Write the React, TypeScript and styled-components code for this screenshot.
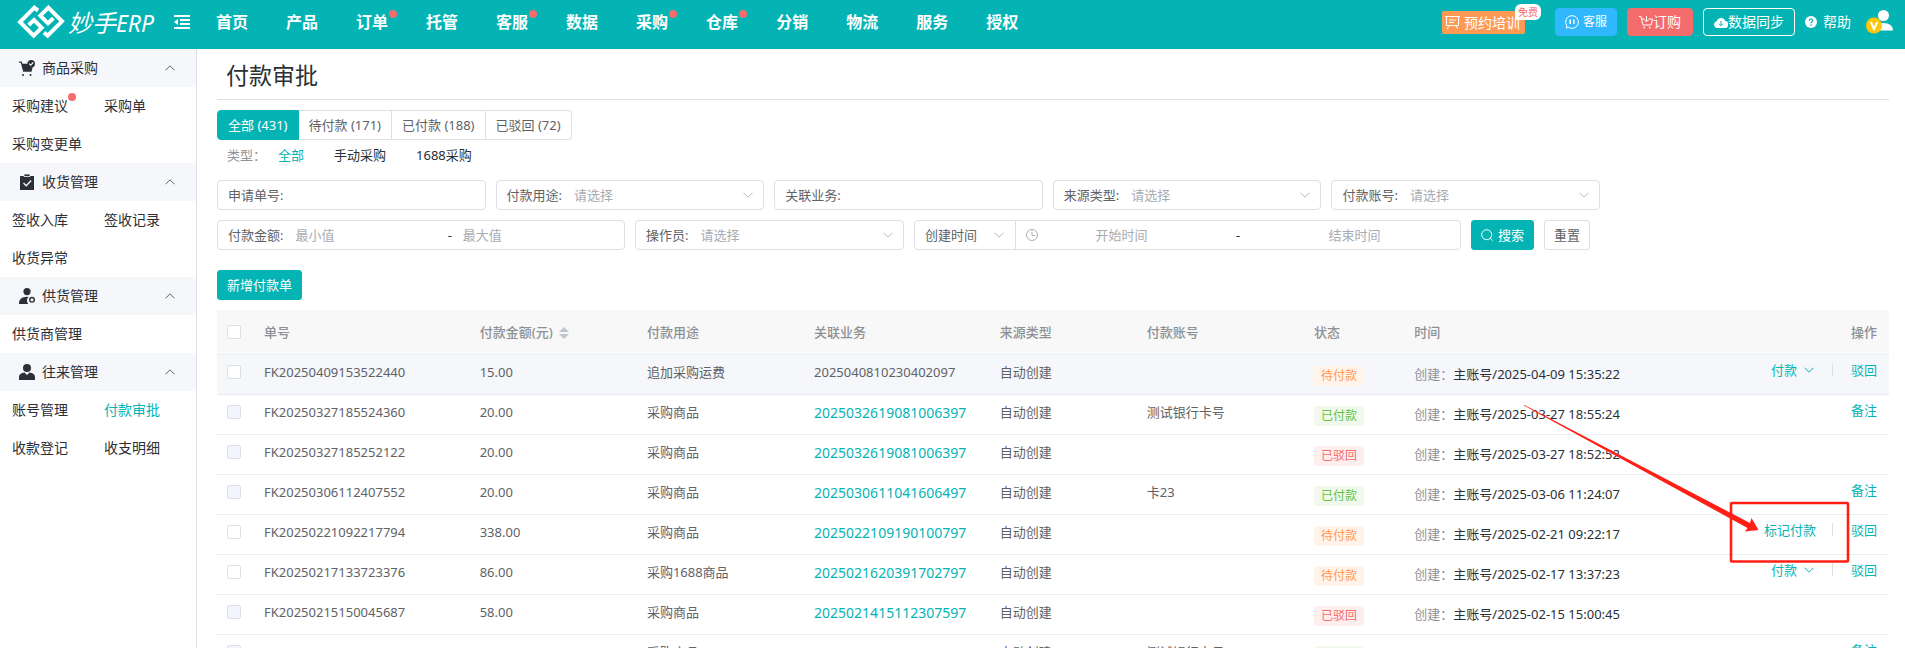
import React from "react";
import styled, { createGlobalStyle, css } from "styled-components";

const teal = "#04b4b4";
const line = "#dcdfe6";
const soft = "#f5f7fb";

const Global = createGlobalStyle`
  * { box-sizing: border-box; }
  body {
    margin: 0;
    color: #2b2f36;
    background: #fff;
    font: 13px/20px "Noto Sans", "Noto Sans CJK SC", sans-serif;
  }
  button, input, select { font: inherit; color: inherit; }
  a { color: inherit; text-decoration: none; }
`;

const Page = styled.div`
  height: 100vh;
  display: flex;
  flex-direction: column;
  overflow: hidden;
`;

const TopBar = styled.header`
  display: flex;
  align-items: center;
  height: 49px;
  flex: none;
  padding: 0 12px 0 17px;
  background: ${teal};
  color: #fff;
`;

const Brand = styled.a`
  display: flex;
  align-items: center;
  gap: 3px;
  width: 140px;
  height: 44px;
  margin-bottom: 5px;
  flex: none;
  font: italic 400 24px/36px "Noto Sans CJK SC", sans-serif;
  white-space: nowrap;
  small { font-family: "Noto Sans", sans-serif; font-size: 23px; }
`;

const IconButton = styled.button`
  display: flex;
  padding: 0;
  border: 0;
  background: none;
  color: inherit;
`;

const Collapse = styled(IconButton)`
  margin: 0 26px 5px 17px;
`;

const Nav = styled.nav`
  display: flex;
  gap: 38px;
`;

const Dot = styled.i`
  position: absolute;
  top: -3px;
  right: -8px;
  width: 8px;
  height: 8px;
  border-radius: 50%;
  background: #f56c6c;
`;

const NavLink = styled.a`
  position: relative;
  height: 24px;
  margin-bottom: 6px;
  font-size: 16px;
  line-height: 24px;
  font-weight: 700;
  white-space: nowrap;
  ${Dot} { top: 0; right: -9px; }
`;

const Tools = styled.div`
  display: flex;
  align-items: center;
  gap: 10px;
  height: 44px;
  margin-left: auto;
  margin-bottom: 5px;
`;

const Training = styled.a`
  position: relative;
  display: flex;
  align-items: center;
  gap: 4px;
  width: 83px;
  height: 23px;
  margin-right: 20px;
  padding-left: 3px;
  border-radius: 2px;
  background: #ff9a55;
  font-size: 14px;
  line-height: 23px;
  white-space: nowrap;
`;

const FreeBadge = styled.span`
  position: absolute;
  top: -7px;
  right: -16px;
  width: 26px;
  height: 16px;
  border-radius: 6px 6px 6px 0;
  background: #fff;
  color: #f56c6c;
  font-size: 10px;
  line-height: 16px;
  text-align: center;
`;

const ToolButton = styled.button<{ $bg?: string; $w: number; $small?: boolean }>`
  display: flex;
  align-items: center;
  justify-content: center;
  gap: ${(p) => (p.$small ? 4 : 0)}px;
  width: ${(p) => p.$w}px;
  height: 28px;
  padding: 0;
  border: 1px solid ${(p) => p.$bg ?? "#fff"};
  border-radius: 4px;
  background: ${(p) => p.$bg ?? "transparent"};
  color: #fff;
  font-size: ${(p) => (p.$small ? 12 : 14)}px;
  white-space: nowrap;
`;

const Help = styled.a`
  display: flex;
  align-items: center;
  gap: 6px;
  margin-right: 5px;
  font-size: 14px;
`;

const Body = styled.div`
  display: flex;
  flex: 1;
  min-height: 0;
`;

const Side = styled.aside`
  width: 197px;
  flex: none;
  border-right: 1px solid ${line};
  font-size: 14px;
`;

const GroupHead = styled.button`
  display: flex;
  align-items: center;
  gap: 6px;
  width: 100%;
  height: 38px;
  padding: 0 21px 0 19px;
  border: 0;
  background: ${soft};
  > svg:last-child { margin-left: auto; }
`;

const GroupItems = styled.div`
  display: grid;
  grid-template-columns: 92px 1fr;
  padding-left: 12px;
  line-height: 38px;
`;

const SideLink = styled.a<{ $active?: boolean }>`
  color: ${(p) => (p.$active ? teal : "inherit")};
  white-space: nowrap;
  span { position: relative; }
`;

const Main = styled.main`
  flex: 1;
  min-width: 0;
  padding: 0 16px 0 20px;
`;

const Title = styled.h1`
  height: 51px;
  margin: 0 0 10px;
  padding-left: 9px;
  border-bottom: 1px solid ${line};
  font-size: 23px;
  line-height: 52px;
  font-weight: 400;
`;

const Tabs = styled.div`
  display: flex;
`;

const Tab = styled.button<{ $active?: boolean }>`
  height: 30px;
  padding: 0 10px;
  border: 1px solid ${line};
  border-left-width: 0;
  background: #fff;
  color: #606266;
  line-height: 28px;
  &:first-child { border-radius: 4px 0 0 4px; border-left-width: 1px; }
  &:last-child { border-radius: 0 4px 4px 0; }
  ${(p) =>
    p.$active &&
    css`
      background: ${teal};
      border-color: ${teal};
      color: #fff;
    `}
`;

const Types = styled.div`
  display: flex;
  gap: 30px;
  height: 40px;
  padding-left: 10px;
  line-height: 30px;
  > span { margin-right: -18px; color: #909399; }
`;

const TypeLink = styled.a<{ $active?: boolean }>`
  color: ${(p) => (p.$active ? teal : "inherit")};
`;

const Filters = styled.div`
  display: flex;
  flex-direction: column;
  gap: 10px;
  padding-right: 289px;
`;

const FilterRow = styled.div`
  display: flex;
  gap: 10px;
  &:last-child { padding-right: 10px; }
`;

const Box = styled.div<{ $w?: number }>`
  display: flex;
  align-items: center;
  flex: ${(p) => (p.$w ? `0 1 ${p.$w}px` : "1 1 0")};
  min-width: 0;
  height: 30px;
  padding: 0 10px;
  border: 1px solid ${line};
  border-radius: 4px;
  color: #606266;
  label { flex: none; }
`;

const DateBox = styled(Box)`
  padding-right: 22px;
`;

const field = css`
  flex: 1;
  width: 0;
  min-width: 0;
  height: 28px;
  padding: 0;
  border: 0;
  outline: 0;
  background: none;
`;

const Input = styled.input<{ $gap?: number; $center?: boolean }>`
  ${field}
  margin-left: ${(p) => p.$gap ?? 12}px;
  text-align: ${(p) => (p.$center ? "center" : "left")};
  &::placeholder { color: #a8abb2; opacity: 1; }
`;

const Select = styled.select<{ $filled?: boolean }>`
  ${field}
  appearance: none;
  margin-left: ${(p) => (p.$filled ? 0 : 12)}px;
  color: ${(p) => (p.$filled ? "#606266" : "#a8abb2")};
`;

const Dash = styled.span<{ $w?: number }>`
  flex: 0 1 ${(p) => p.$w ?? 6}px;
  color: #2b2f36;
  text-align: center;
`;

const DateKind = styled.div`
  display: flex;
  align-items: center;
  width: 91px;
  flex: none;
  height: 28px;
  margin-right: 10px;
  padding-right: 11px;
  border-right: 1px solid ${line};
`;

const Button = styled.button<{ $primary?: boolean }>`
  display: flex;
  align-items: center;
  flex: none;
  gap: 5px;
  height: 30px;
  padding: 0 9px;
  border: 1px solid ${(p) => (p.$primary ? teal : line)};
  border-radius: 3px;
  background: ${(p) => (p.$primary ? teal : "#fff")};
  color: ${(p) => (p.$primary ? "#fff" : "#606266")};
`;

const Create = styled(Button)`
  margin: 20px 0 10px;
`;

const TableWrap = styled.div`
  position: relative;
`;

const Table = styled.table`
  width: 100%;
  table-layout: fixed;
  border-collapse: collapse;
  color: #606266;
`;

const Th = styled.th<{ $right?: boolean }>`
  height: 44px;
  padding: 0 10px;
  border-bottom: 1px solid #ebeef5;
  background: #f8f8f8;
  color: #8d9095;
  font-weight: 500;
  text-align: ${(p) => (p.$right ? "right" : "left")};
  white-space: nowrap;
  svg { margin-left: 6px; vertical-align: -2px; }
  &:last-child { padding-right: 12px; }
`;

const Row = styled.tr<{ $hover?: boolean }>`
  height: 40px;
  background: ${(p) => (p.$hover ? soft : "#fff")};
`;

const Td = styled.td`
  padding: 7px 10px 0;
  border-bottom: 1px solid #e9ecf1;
  vertical-align: top;
  white-space: nowrap;
  &:last-child { padding-right: 12px; }
`;

const Check = styled.input`
  appearance: none;
  display: block;
  width: 14px;
  height: 14px;
  margin: 3px 0 0;
  border: 1px solid ${line};
  border-radius: 2px;
  background: #fff;
  &:disabled { background: #f2f5fb; }
  th & { margin-top: 0; }
`;

const BizLink = styled.a`
  color: ${teal};
  font-size: 14px;
  line-height: 22px;
`;

const tones = {
  待付款: ["#ff9a4c", "#fff3ea"],
  已付款: ["#67c23a", "#f0f9eb"],
  已驳回: ["#f56c6c", "#feeeee"],
};
type Status = keyof typeof tones;

const Tag = styled.span<{ $s: Status }>`
  display: block;
  width: 50px;
  height: 20px;
  margin-top: 4px;
  border-radius: 4px;
  background: ${(p) => tones[p.$s][1]};
  color: ${(p) => tones[p.$s][0]};
  font-size: 12px;
  line-height: 20px;
  text-align: center;
`;

const Time = styled.div`
  color: #2b2f36;
  line-height: 24px;
  span { color: #909399; }
`;

const Actions = styled.div`
  display: flex;
  align-items: center;
  justify-content: flex-end;
  height: 16px;
  color: ${teal};
`;

const Action = styled.button`
  display: flex;
  align-items: center;
  gap: 7px;
  padding: 0;
  border: 0;
  background: none;
  color: ${teal};
  line-height: 16px;
`;

const Divider = styled.i<{ $gap: number }>`
  width: 1px;
  height: 13px;
  margin: 0 18px 0 ${(p) => p.$gap}px;
  background: ${line};
`;

const Annotation = styled.svg`
  position: absolute;
  top: 90px;
  right: 35px;
  pointer-events: none;
`;

const Chevron = ({ up, color = "#b4b8c0", w = 10 }: { up?: boolean; color?: string; w?: number }) => (
  <svg width={w} height="6" viewBox="0 0 10 6" fill="none" stroke={color} aria-hidden>
    <path d={up ? "M.5 5.3 5 .8l4.500 4.500" : "M.5.7 5 5.200 9.500.7"} />
  </svg>
);

const Logo = () => (
  <svg width="48" height="34" viewBox="51 15 144 102" fill="none" stroke="#fff" strokeWidth="12" aria-hidden>
    <path d="M114 32 103 23 60 66l41 41 24-24-23-23-16 15" />
    <path d="M132 98l11 9 43-43-41-41-24 24 23 23 16-15" />
  </svg>
);

const groupIcons = {
  cart: (
    <>
      <path d="M0 1.500h2.600l.9 2.200h5.200a4 4 0 0 0 5 3.300l-1.200 4.800H4.200L1.800 2.800H0z" />
      <circle cx="12.200" cy="3.800" r="3.800" />
      <path d="m10.300 3.700 1.400 1.500 2.600-2.700" fill="none" stroke={soft} strokeWidth="1.100" />
      <circle cx="4" cy="15" r="1" />
      <circle cx="11.500" cy="15" r="1" />
    </>
  ),
  clip: (
    <>
      <path d="M1 2h14v14H1z" />
      <path d="M5 0h6v2.500H5z" stroke={soft} strokeWidth=".8" />
      <path d="m4.500 9 2.700 2.700 5-5.200" fill="none" stroke={soft} strokeWidth="1.400" />
    </>
  ),
  gear: (
    <>
      <circle cx="8" cy="3.600" r="3.600" />
      <path d="M0 16c0-5 3-7 8-7.200 1 0 1.500.3 1.500.3-2 1.900-2 4.900-.3 6.900z" />
      <circle cx="13" cy="11.800" r="2.300" fill="none" stroke="#2b2f36" strokeWidth="1.400" />
    </>
  ),
  user: (
    <>
      <circle cx="8" cy="4" r="4" />
      <path d="M0 16v-3c0-2.500 2-4 5.500-4.500L8 11l2.500-2.500C14 9 16 10.500 16 13v3z" />
    </>
  ),
};

const nav: [string, boolean?][] = [
  ["首页"], ["产品"], ["订单", true], ["托管"], ["客服", true], ["数据"],
  ["采购", true], ["仓库", true], ["分销"], ["物流"], ["服务"], ["授权"],
];

const groups: { name: string; icon: keyof typeof groupIcons; items: string[] }[] = [
  { name: "商品采购", icon: "cart", items: ["采购建议", "采购单", "采购变更单"] },
  { name: "收货管理", icon: "clip", items: ["签收入库", "签收记录", "收货异常"] },
  { name: "供货管理", icon: "gear", items: ["供货商管理"] },
  { name: "往来管理", icon: "user", items: ["账号管理", "付款审批", "收款登记", "收支明细"] },
];

type Item = {
  no: string; amount: string; use: string; biz: string; plain?: boolean;
  account?: string; status: Status; time: string; acts: string[];
};

const rows: Item[] = [
  { no: "FK20250409153522440", amount: "15.00", use: "追加采购运费", biz: "2025040810230402097", plain: true, status: "待付款", time: "2025-04-09 15:35:22", acts: ["付款", "驳回"] },
  { no: "FK20250327185524360", amount: "20.00", use: "采购商品", biz: "2025032619081006397", account: "测试银行卡号", status: "已付款", time: "2025-03-27 18:55:24", acts: ["备注"] },
  { no: "FK20250327185252122", amount: "20.00", use: "采购商品", biz: "2025032619081006397", status: "已驳回", time: "2025-03-27 18:52:52", acts: [] },
  { no: "FK20250306112407552", amount: "20.00", use: "采购商品", biz: "2025030611041606497", account: "卡23", status: "已付款", time: "2025-03-06 11:24:07", acts: ["备注"] },
  { no: "FK20250221092217794", amount: "338.00", use: "采购商品", biz: "2025022109190100797", status: "待付款", time: "2025-02-21 09:22:17", acts: ["标记付款", "驳回"] },
  { no: "FK20250217133723376", amount: "86.00", use: "采购1688商品", biz: "2025021620391702797", status: "待付款", time: "2025-02-17 13:37:23", acts: ["付款", "驳回"] },
  { no: "FK20250215150045687", amount: "58.00", use: "采购商品", biz: "2025021415112307597", status: "已驳回", time: "2025-02-15 15:00:45", acts: [] },
  { no: "FK20250215150021034", amount: "70.00", use: "采购商品", biz: "2025021415112307597", account: "测试银行卡号", status: "已付款", time: "2025-02-15 15:00:21", acts: ["备注"] },
];

const SelectBox = ({ id, label, w }: { id: string; label: string; w?: number }) => (
  <Box $w={w}>
    <label htmlFor={id}>{label}:</label>
    <Select id={id}><option>请选择</option></Select>
    <Chevron />
  </Box>
);

export default function App() {
  return (
    <Page>
      <Global />
      <TopBar>
        <Brand href="#">
          <Logo />
          <span>妙手<small>ERP</small></span>
        </Brand>
        <Collapse aria-label="收起菜单">
          <svg width="16" height="14" viewBox="0 0 16 14" fill="none" stroke="#fff" strokeWidth="2">
            <path d="M0 1h16M6 5h10M6 9h10M0 13h16" />
            <path d="M4 4v6L0 7z" fill="#fff" stroke="none" />
          </svg>
        </Collapse>
        <Nav>
          {nav.map(([n, dot]) => (
            <NavLink href="#" key={n}>{n}{dot && <Dot />}</NavLink>
          ))}
        </Nav>
        <Tools>
          <Training href="#">
            <svg width="15" height="15" viewBox="0 0 15 15" fill="none" stroke="#fff" aria-hidden>
              <path d="M0 1.500h15M1.500 1.500v9h12v-9M4 5h7M4 7.500h5M4.500 10.500 2 14M10.500 10.500 13 14" />
            </svg>
            预约培训
            <FreeBadge>免费</FreeBadge>
          </Training>
          <ToolButton $bg="#30b8ff" $w={62} $small>
            <svg width="14" height="14" viewBox="0 0 14 14" fill="none" stroke="#fff" aria-hidden>
              <path d="M7 .6a6.400 6.400 0 1 1-4 11.400l-1.600 1.300.3-2.700A6.400 6.400 0 0 1 7 .6z" />
              <path d="M5.200 4.500v4.500M8.800 4.500v4.500" strokeWidth="1.600" />
            </svg>
            客服
          </ToolButton>
          <ToolButton $bg="#f56c6c" $w={66}>
            <svg width="14" height="14" viewBox="0 0 14 14" fill="none" stroke="#fff" aria-hidden>
              <path d="M0 1.500h2l2 8.500h8l1.500-6H9.500M3 4h2.500M7.500 1v5.500M5.500 4.800l2 2 2-2" />
              <path d="M4.500 12.500h1.500M10 12.500h1.500" strokeWidth="1.500" />
            </svg>
            订购
          </ToolButton>
          <ToolButton $w={92}>
            <svg width="14" height="11" viewBox="0 0 14 11" fill="#fff" aria-hidden>
              <path d="M3.500 11A3.400 3.400 0 0 1 2.700 4.300 4.400 4.400 0 0 1 11.200 4 3.500 3.500 0 0 1 10.500 11z" />
              <path d="M7 4v4.500M5 6.700l2 2 2-2" fill="none" stroke={teal} />
            </svg>
            数据同步
          </ToolButton>
          <Help href="#">
            <svg width="12" height="12" viewBox="0 0 12 12" aria-hidden>
              <circle cx="6" cy="6" r="6" fill="#fff" />
              <path d="M4.300 4.800C4.300 2.500 7.800 2.600 7.700 4.600 7.700 5.700 6 5.900 6 7.200" fill="none" stroke={teal} strokeWidth="1.300" />
              <circle cx="6" cy="9.100" r=".8" fill={teal} />
            </svg>
            帮助
          </Help>
          <IconButton aria-label="账户">
            <svg width="27" height="24" viewBox="0 0 27 24" aria-hidden>
              <circle cx="17.500" cy="5.500" r="5.500" fill="#fff" />
              <path d="M8 20.500c0-4.500 3-7.500 9-7.500 6.500 0 10 3 10 7.500z" fill="#fff" />
              <circle cx="8" cy="15.500" r="8" fill="#ffc60a" />
              <path d="m4.800 12 3.200 7 3.200-7" fill="none" stroke="#fff" strokeWidth="2" />
            </svg>
          </IconButton>
        </Tools>
      </TopBar>
      <Body>
        <Side>
          {groups.map((g) => (
            <section key={g.name}>
              <GroupHead aria-expanded="true">
                <svg width="17" height="17" viewBox="0 0 17 17" fill="#2b2f36" aria-hidden>{groupIcons[g.icon]}</svg>
                {g.name}
                <Chevron up color="#606266" />
              </GroupHead>
              <GroupItems>
                {g.items.map((t) => (
                  <SideLink href="#" key={t} $active={t === "付款审批"}>
                    <span>{t}{t === "采购建议" && <Dot />}</span>
                  </SideLink>
                ))}
              </GroupItems>
            </section>
          ))}
        </Side>
        <Main>
          <Title>付款审批</Title>
          <Tabs>
            <Tab $active>全部 (431)</Tab>
            <Tab>待付款 (171)</Tab>
            <Tab>已付款 (188)</Tab>
            <Tab>已驳回 (72)</Tab>
          </Tabs>
          <Types>
            <span>类型：</span>
            <TypeLink href="#" $active>全部</TypeLink>
            <TypeLink href="#">手动采购</TypeLink>
            <TypeLink href="#">1688采购</TypeLink>
          </Types>
          <Filters>
            <FilterRow>
              <Box><label htmlFor="no">申请单号:</label><Input id="no" /></Box>
              <SelectBox id="use" label="付款用途" />
              <Box><label htmlFor="biz">关联业务:</label><Input id="biz" /></Box>
              <SelectBox id="source" label="来源类型" />
              <SelectBox id="account" label="付款账号" />
            </FilterRow>
            <FilterRow>
              <Box $w={408}>
                <label htmlFor="min">付款金额:</label>
                <Input id="min" placeholder="最小值" />
                <Dash>-</Dash>
                <Input $gap={10} placeholder="最大值" aria-label="最大值" />
              </Box>
              <SelectBox id="operator" label="操作员" w={269} />
              <DateBox>
                <DateKind>
                  <Select $filled aria-label="时间类型"><option>创建时间</option></Select>
                  <Chevron />
                </DateKind>
                <svg width="12" height="12" viewBox="0 0 12 12" fill="none" stroke="#a8abb2" aria-hidden>
                  <circle cx="6" cy="6" r="5.500" />
                  <path d="M6 2.500V6.500h3" />
                </svg>
                <Input $center $gap={0} placeholder="开始时间" aria-label="开始时间" />
                <Dash $w={66}>-</Dash>
                <Input $center $gap={0} placeholder="结束时间" aria-label="结束时间" />
              </DateBox>
              <Button $primary>
                <svg width="12" height="12" viewBox="0 0 12 12" fill="none" stroke="#fff" aria-hidden>
                  <circle cx="5.700" cy="5.700" r="5" />
                  <path d="m9.200 9.200 2.500 2.500" />
                </svg>
                搜索
              </Button>
              <Button>重置</Button>
            </FilterRow>
          </Filters>
          <Create $primary>新增付款单</Create>
          <TableWrap>
            <Table>
              <colgroup>
                <col style={{ width: 37 }} />
                {[12.9, 10, 10, 11.1, 8.8, 10, 6].map((w, i) => <col key={i} style={{ width: `${w}%` }} />)}
                <col />
              </colgroup>
              <thead>
                <tr>
                  <Th><Check type="checkbox" aria-label="全选" /></Th>
                  <Th>单号</Th>
                  <Th>
                    付款金额(元)
                    <svg width="10" height="12" viewBox="0 0 10 12" fill="#c0c4cc" aria-hidden>
                      <path d="M5 0l5 5H0zM5 12l5-5H0z" />
                    </svg>
                  </Th>
                  <Th>付款用途</Th>
                  <Th>关联业务</Th>
                  <Th>来源类型</Th>
                  <Th>付款账号</Th>
                  <Th>状态</Th>
                  <Th>时间</Th>
                  <Th $right>操作</Th>
                </tr>
              </thead>
              <tbody>
                {rows.map((r, i) => (
                  <Row key={r.no} $hover={i === 0}>
                    <Td><Check type="checkbox" aria-label={r.no} disabled={r.status !== "待付款"} /></Td>
                    <Td>{r.no}</Td>
                    <Td>{r.amount}</Td>
                    <Td>{r.use}</Td>
                    <Td>{r.plain ? r.biz : <BizLink href="#">{r.biz}</BizLink>}</Td>
                    <Td>自动创建</Td>
                    <Td>{r.account}</Td>
                    <Td><Tag $s={r.status}>{r.status}</Tag></Td>
                    <Td><Time><span>创建：</span>主账号/{r.time}</Time></Td>
                    <Td>
                      <Actions>
                        {r.acts.map((a, k) => (
                          <React.Fragment key={a}>
                            {k > 0 && <Divider $gap={r.acts[0] === "付款" ? 18 : 16} />}
                            <Action>{a}{a === "付款" && <Chevron color={teal} />}</Action>
                          </React.Fragment>
                        ))}
                      </Actions>
                    </Td>
                  </Row>
                ))}
              </tbody>
            </Table>
            <Annotation width="334" height="166" viewBox="1520 400 334 166" fill="#ff1f14" aria-hidden>
              <rect x="1731" y="503" width="117" height="58.500" rx="1" fill="none" stroke="#ff1f14" strokeWidth="2.600" />
              <path d="M1524 404.800v.6L1747.500 528l-2.500 3.500 13.500-1.500-7-12-1.500 5z" />
            </Annotation>
          </TableWrap>
        </Main>
      </Body>
    </Page>
  );
}
